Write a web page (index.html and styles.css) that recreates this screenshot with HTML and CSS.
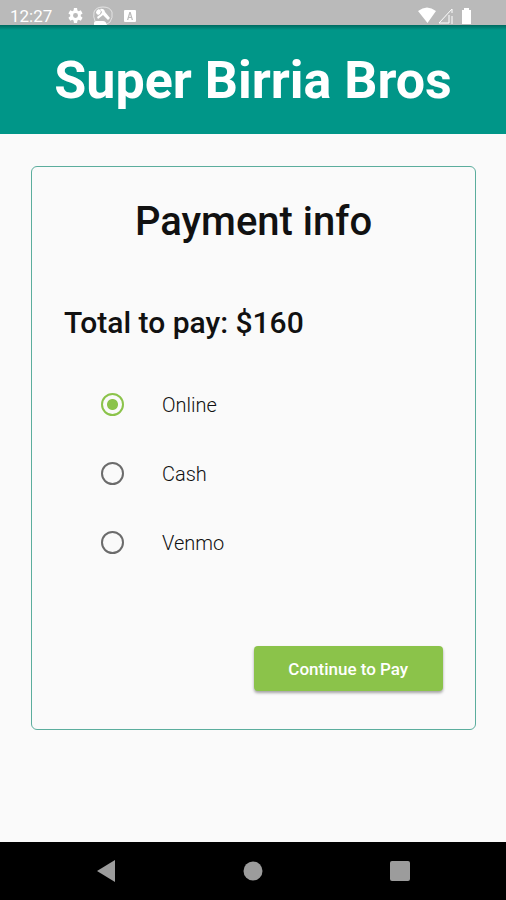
FILE: index.html
```html
<!DOCTYPE html>
<html lang="en">
<head>
<meta charset="utf-8">
<meta name="viewport" content="width=device-width, initial-scale=1">
<title>Super Birria Bros</title>
<link rel="stylesheet" href="styles.css">
</head>
<body>
<div class="status">
  <span class="clock">12:27</span>
  <svg class="status-icon" viewBox="0 0 24 24" aria-hidden="true"><path fill-rule="evenodd" d="M19.4 13a7.500 7.500 0 0 0 0-2l2.600-2-2.500-4.300-3.100 1.200a7 7 0 0 0-1.700-1L14.200 1.500H9.800L9.300 4.900a7 7 0 0 0-1.700 1L4.500 4.700 2 9l2.600 2a7.500 7.500 0 0 0 0 2L2 15l2.500 4.300 3.100-1.200a7 7 0 0 0 1.700 1l.5 3.400h4.400l.5-3.400a7 7 0 0 0 1.700-1l3.100 1.200L22 15zM12 15.500a3.500 3.500 0 1 1 0-7 3.500 3.500 0 0 1 0 7z"/></svg>
  <svg class="status-icon wide" viewBox="0 0 20 20" aria-hidden="true"><path class="outline faint" d="M2 15Q0 11 1 6Q3 1 10 1T19 6Q20 12 17 16L14 18"/><path d="M3 7Q3 4 6 3L8 5 7 8 5 9zM7 3Q11 2 12 6L17 12 15 14 10 9 5 13 4 11 8 8 9 6zM1 19v-2q0-2 2-2h7q3 0 4 4z"/></svg>
  <svg class="status-icon small" viewBox="0 0 14 14" aria-hidden="true"><path fill-rule="evenodd" d="M2 1h10q1 0 1 1v10q0 1-1 1H2q-1 0-1-1V2q0-1 1-1zM6.300 3L4 11h1.300l.5-2h2.400l.5 2H10L7.700 3zM7 5l.8 3H6.200z"/></svg>
  <span class="spacer"></span>
  <svg class="status-icon signal" viewBox="0 0 56 18" aria-hidden="true"><path d="M0 4Q9-3 18 4L9.500 16zM44 3h2V1h5v2h2v14h-9z"/><path class="outline" d="M34 9v8M34 2L21 16h10V8M34 2v4"/></svg>
</div>
<header class="header"><h1>Super Birria Bros</h1></header>
<main class="content">
  <form class="card">
    <h2>Payment info</h2>
    <p class="total">Total to pay: $160</p>
    <div class="options" role="radiogroup" aria-label="Payment method">
      <label class="option"><input type="radio" name="method" checked><span>Online</span></label>
      <label class="option"><input type="radio" name="method"><span>Cash</span></label>
      <label class="option"><input type="radio" name="method"><span>Venmo</span></label>
    </div>
    <button class="pay" type="button">Continue to Pay</button>
  </form>
</main>
<nav class="nav" aria-label="System">
  <button type="button" aria-label="Back"><svg viewBox="0 0 20 22"><path d="M19 0v22L1 11z"/></svg></button>
  <button type="button" aria-label="Home"><svg viewBox="0 0 20 22"><circle cx="10" cy="11" r="9.500"/></svg></button>
  <button type="button" aria-label="Recent apps"><svg viewBox="0 0 20 22"><rect y="1" width="20" height="20" rx="2"/></svg></button>
</nav>
</body>
</html>
```
FILE: styles.css
```css
* { box-sizing: border-box; }
body {
  margin: 0;
  min-height: 100vh;
  display: flex;
  flex-direction: column;
  background: #fafafa;
  color: #111;
  font-family: Roboto, "Liberation Sans", sans-serif;
}
h1, h2, p { margin: 0; }
.status {
  height: 25px;
  padding: 6px 32px 0 10px;
  display: flex;
  align-items: center;
  background: #bababa;
  color: #fff;
}
.clock { width: 57px; font-size: 17px; line-height: 20px; }
.status-icon { width: 17px; height: 17px; margin-right: 9px; fill: #fff; }
.status-icon.wide { width: 20px; height: 20px; margin-right: 10px; }
.status-icon.small { width: 14px; height: 14px; }
.status-icon.signal { width: 56px; height: 18px; margin: 0; }
.outline { fill: none; stroke: #fff; stroke-width: 1; }
.faint { opacity: .6; }
.spacer { flex: 1; }
.header {
  padding: 24px 16px 21px;
  background: linear-gradient(#00695f, #009688 5px);
  color: #fff;
  text-align: center;
}
.header h1 { font-size: 52px; line-height: 64px; font-weight: 700; }
.content { flex: 1; padding: 32px 30px 32px 31px; }
.card {
  padding: 31px 32px 38px;
  display: flex;
  flex-direction: column;
  border: 1px solid #5bad9d;
  border-radius: 6px;
}
.card h2 { font-size: 40px; line-height: 48px; font-weight: 500; text-align: center; }
.total { margin-top: 59px; font-size: 30px; line-height: 36px; font-weight: 500; }
.options { margin-top: 29px; }
.option {
  height: 69px;
  padding-left: 37px;
  display: flex;
  align-items: center;
  gap: 38px;
  font-size: 20px;
  line-height: 24px;
  font-weight: 300;
}
.option input {
  appearance: none;
  width: 23px;
  height: 23px;
  margin: 0;
  border: 2px solid #6b6b6b;
  border-radius: 50%;
}
.option input:checked {
  border-color: #8bc34a;
  background: radial-gradient(circle, #8bc34a 5px, transparent 6px);
}
.pay {
  width: 50%;
  height: 45px;
  margin-top: 69px;
  align-self: flex-end;
  border: 0;
  border-radius: 4px;
  background: #8bc34a;
  box-shadow: 0 2px 3px rgba(0, 0, 0, .35);
  color: #fff;
  font: 500 17px/20px Roboto, "Liberation Sans", sans-serif;
}
.nav {
  height: 58px;
  padding: 0 33px;
  display: flex;
  background: #000;
}
.nav button {
  flex: 1;
  padding: 0;
  display: flex;
  align-items: center;
  justify-content: center;
  border: 0;
  background: none;
}
.nav svg { width: 20px; height: 22px; fill: #9c9c9c; }
```
